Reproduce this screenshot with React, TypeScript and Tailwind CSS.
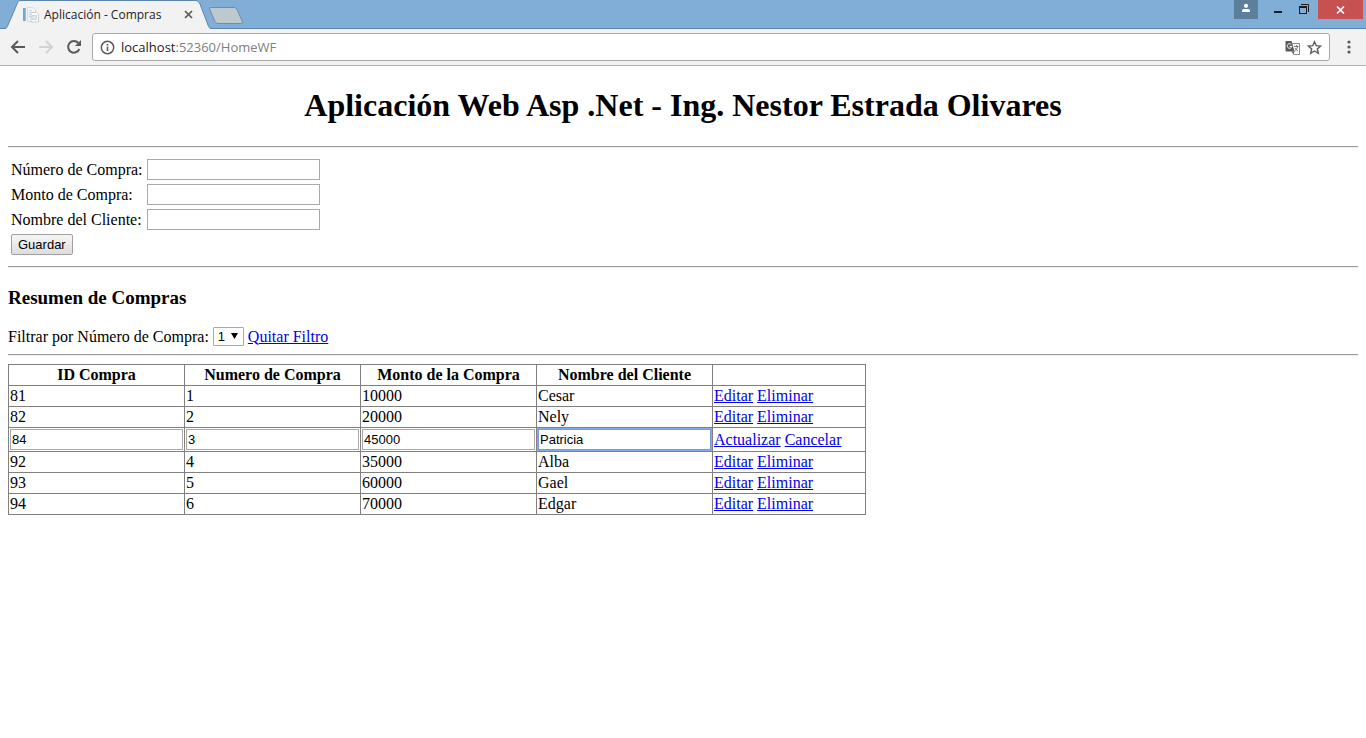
import { useState } from "react";
import type { ReactNode } from "react";

type Purchase = { id: string; number: string; amount: string; client: string };

const purchases: Purchase[] = [
  { id: "81", number: "1", amount: "10000", client: "Cesar" },
  { id: "82", number: "2", amount: "20000", client: "Nely" },
  { id: "84", number: "3", amount: "45000", client: "Patricia" },
  { id: "92", number: "4", amount: "35000", client: "Alba" },
  { id: "93", number: "5", amount: "60000", client: "Gael" },
  { id: "94", number: "6", amount: "70000", client: "Edgar" },
];

const columns = ["ID Compra", "Numero de Compra", "Monto de la Compra", "Nombre del Cliente"];

const fields = [
  { id: "numero", label: "Número de Compra:" },
  { id: "monto", label: "Monto de Compra:" },
  { id: "nombre", label: "Nombre del Cliente:" },
];

function Rule() {
  return <hr className="h-[2px] border-0 border-t border-b border-t-[#9a9a9a] border-b-[#eeeeee]" />;
}

function ActionLink({ children }: { children: ReactNode }) {
  return (
    <a href="#" className="text-[#0000ee] underline">
      {children}
    </a>
  );
}

function TabStrip() {
  return (
    <div className="flex h-[29px] items-start justify-between border-b border-[#5b85ad] bg-[#80aed6]">
      <div className="flex">
        <div className="relative ml-[5px] flex h-[29px] w-[206px] items-center pl-[18px] pr-[18px]">
          <svg className="absolute inset-0" width="206" height="29" viewBox="0 0 206 29" aria-hidden="true">
            <path d="M0 29C2 28 2 27 3 25L12 4C13 2 13 1 15 0.5H191C193 1 194 2 195 4L203 25C204 27 204 28 206 29Z" fill="#f2f2f2" />
            <path d="M0 28.5C2 28 2 27 3 25L12 4C13 2 13 1 15 0.5H191C193 1 194 2 195 4L203 25C204 27 204 28 206 28.5" fill="none" stroke="#5b85ad" />
          </svg>
          <svg className="relative shrink-0" width="16" height="16" viewBox="0 0 16 16" aria-hidden="true">
            <rect x="0" y="1" width="2.700" height="13" fill="#69acd9" />
            <path d="M4.500 0.500H10L12.500 3V14.500H4.500Z" fill="#f4f7f9" stroke="#d3dbe1" />
            <path d="M6 3.500H9M6 5.500H7.500M6 7.500H7.500M6 9.500H7.500" stroke="#c3cdd4" />
            <path d="M8 5.500H13.500L15.500 7.500V15H8Z" fill="#fafcfd" stroke="#c6cfd6" />
            <path d="M9 8.500H13.500V12.500H9Z" fill="#e3e8ec" stroke="#ccd4da" />
          </svg>
          <span className="relative ml-[5px] grow whitespace-nowrap font-['Open_Sans',sans-serif] text-[12px] leading-4 text-[#222222]">
            Aplicación - Compras
          </span>
          <button type="button" aria-label="Cerrar pestaña" className="relative">
            <svg width="9" height="9" viewBox="0 0 9 9">
              <path d="M1 1L8 8M8 1L1 8" stroke="#5a5a5a" strokeWidth="1.7" />
            </svg>
          </button>
        </div>
        <button type="button" aria-label="Nueva pestaña" className="-ml-[3px] mt-[6px] h-[19px]">
          <svg width="36" height="19" viewBox="0 0 36 19">
            <path d="M3 1.500H26Q28 1.500 29 3.500L34.500 16Q35 17.500 33 17.500H10Q8 17.500 7 15.500L1.500 3Q1 1.500 3 1.500Z" fill="#bdc8cf" stroke="#6c8eae" />
          </svg>
        </button>
      </div>
      <div className="flex items-start pr-[3px]">
        <button type="button" aria-label="Usuario" className="flex h-[19px] w-6 justify-center bg-[#5c7f9b] pt-[3px]">
          <svg width="10" height="10" viewBox="0 0 10 10">
            <circle cx="5" cy="2.800" r="2.100" fill="#ffffff" />
            <path d="M1 9V7.500Q1 6 3 6H7Q9 6 9 7.500V9Z" fill="#ffffff" />
          </svg>
        </button>
        <button type="button" aria-label="Minimizar" className="ml-[15px] flex h-[19px] w-[10px] items-start pt-[11px]">
          <svg width="10" height="3" viewBox="0 0 10 3">
            <rect x="1" width="8" height="2" fill="#1c1c1c" />
          </svg>
        </button>
        <button type="button" aria-label="Restaurar" className="ml-4 flex h-[19px] w-[11px] items-start pt-[4px]">
          <svg width="11" height="10" viewBox="0 0 11 10">
            <path d="M2 0.500H9.500V8" fill="none" stroke="#1c1c1c" />
            <path d="M0 2H8V10H0ZM1 4V9H7V4Z" fill="#1c1c1c" fillRule="evenodd" />
          </svg>
        </button>
        <button type="button" aria-label="Cerrar" className="ml-[8px] flex h-[19px] w-[45px] items-center justify-center bg-[#c75050]">
          <svg width="9" height="8" viewBox="0 0 9 8">
            <path d="M1 0.500L8 7.500M8 0.500L1 7.500" stroke="#ffffff" strokeWidth="1.700" />
          </svg>
        </button>
      </div>
    </div>
  );
}

function Toolbar() {
  return (
    <div className="flex h-[37px] items-center border-b border-[#b3b3b3] bg-[#f2f2f2] pl-[10px] pr-[15px]">
      <button type="button" aria-label="Atrás">
        <svg width="16" height="16" viewBox="0 0 16 16">
          <path d="M15 8H2.500M8 2L2 8L8 14" fill="none" stroke="#5a5a5a" strokeWidth="2" />
        </svg>
      </button>
      <button type="button" aria-label="Adelante" className="ml-[12px]">
        <svg width="16" height="16" viewBox="0 0 16 16">
          <path d="M1 8H13.500M8 2L14 8L8 14" fill="none" stroke="#d2d2d2" strokeWidth="2" />
        </svg>
      </button>
      <button type="button" aria-label="Recargar" className="ml-[12px]">
        <svg width="16" height="16" viewBox="0 0 16 16">
          <path d="M13.300 10A5.800 5.800 0 1 1 12.300 4" fill="none" stroke="#5a5a5a" strokeWidth="2" />
          <path d="M15 1V7H9Z" fill="#5a5a5a" />
        </svg>
      </button>
      <div className="ml-[10px] flex h-[28px] grow items-center rounded-[3px] border border-[#a9a9a9] bg-white pl-[7px] pr-[7px]">
        <svg width="15" height="15" viewBox="0 0 15 15" aria-hidden="true">
          <circle cx="7.500" cy="7.500" r="6.200" fill="none" stroke="#5a5a5a" strokeWidth="1.500" />
          <path d="M7.500 6.500V11M7.500 4V5.500" stroke="#5a5a5a" strokeWidth="1.600" />
        </svg>
        <span className="ml-[6px] grow font-['Open_Sans',sans-serif] text-[13px] leading-5 text-[#808080]">
          <span className="text-[#222222]">localhost</span>:52360/HomeWF
        </span>
        <button type="button" aria-label="Traducir">
          <svg width="15" height="15" viewBox="0 0 15 15">
            <path d="M7 3.500H14.500V14.500H8.500" fill="#ffffff" stroke="#8a8a8a" />
            <path d="M9 6.500H13.500M11.500 5V6.500M12.500 7Q12 9.500 9.500 11M10 8Q11 10 13 11" fill="none" stroke="#777777" />
            <path d="M1 1H6.500L9.500 11.500H1.500Q0.500 11.500 0.500 10.500V1.500Z" fill="#5a5a5a" />
            <path d="M6.500 11.500H9.500L8.500 14.500Z" fill="#5a5a5a" />
            <path d="M6.300 4.500A2.300 2.300 0 1 0 6.800 6.500H4.600" fill="none" stroke="#ffffff" />
          </svg>
        </button>
        <button type="button" aria-label="Marcador" className="ml-[7px]">
          <svg width="15" height="15" viewBox="0 0 15 15">
            <path d="M7.500 1.700L9.200 5.700L13.600 6.100L10.300 9L11.300 13.300L7.500 11L3.700 13.300L4.700 9L1.400 6.100L5.800 5.700Z" fill="none" stroke="#5a5a5a" strokeWidth="1.400" />
          </svg>
        </button>
      </div>
      <button type="button" aria-label="Menú" className="ml-[17px]">
        <svg width="4" height="14" viewBox="0 0 4 14">
          <circle cx="2" cy="2" r="1.600" fill="#5a5a5a" />
          <circle cx="2" cy="7" r="1.600" fill="#5a5a5a" />
          <circle cx="2" cy="12" r="1.600" fill="#5a5a5a" />
        </svg>
      </button>
    </div>
  );
}

function PurchaseForm() {
  return (
    <form className="flex flex-col gap-1 px-[3px] pt-[11px] pb-[11px]" onSubmit={(e) => e.preventDefault()}>
      {fields.map((field) => (
        <div key={field.id} className="flex items-center">
          <label htmlFor={field.id} className="w-[136px] whitespace-nowrap">
            {field.label}
          </label>
          <input
            id={field.id}
            type="text"
            className="h-[21px] w-[173px] border border-[#a9a9a9] bg-white px-[2px] font-['Liberation_Sans',sans-serif] text-[13px] outline-none"
          />
        </div>
      ))}
      <button
        type="submit"
        className="h-[21px] self-start rounded-[2px] border border-[#a0a0a0] bg-linear-to-b from-[#f6f6f6] to-[#dddddd] px-[6px] font-['Liberation_Sans',sans-serif] text-[13px] leading-[19px]"
      >
        Guardar
      </button>
    </form>
  );
}

function PurchaseTable() {
  const [draft, setDraft] = useState<Purchase>(purchases[2]);
  const keys: (keyof Purchase)[] = ["id", "number", "amount", "client"];

  return (
    <table className="table-fixed border-collapse">
      <colgroup>
        <col className="w-[176px]" />
        <col className="w-[176px]" />
        <col className="w-[176px]" />
        <col className="w-[176px]" />
        <col className="w-[153px]" />
      </colgroup>
      <thead>
        <tr>
          {columns.map((name) => (
            <th key={name} scope="col" className="border border-[#808080] p-px text-center font-bold">
              {name}
            </th>
          ))}
          <td className="border border-[#808080] p-px" />
        </tr>
      </thead>
      <tbody>
        {purchases.map((row) => {
          const editing = row.id === "84";
          return (
            <tr key={row.id}>
              {keys.map((key, i) => (
                <td key={key} className="border border-[#808080] p-px">
                  {editing ? (
                    <input
                      type="text"
                      aria-label={columns[i]}
                      value={draft[key]}
                      onChange={(e) => setDraft({ ...draft, [key]: e.target.value })}
                      className={
                        key === "client"
                          ? "block h-[21px] w-full border border-[#7b9cd6] px-px font-['Liberation_Sans',sans-serif] text-[13px] ring-1 ring-[#86aaea] outline-none"
                          : "block h-[21px] w-full border border-[#a9a9a9] px-px font-['Liberation_Sans',sans-serif] text-[13px] outline-none"
                      }
                    />
                  ) : (
                    row[key]
                  )}
                </td>
              ))}
              <td className="border border-[#808080] p-px whitespace-nowrap">
                <ActionLink>{editing ? "Actualizar" : "Editar"}</ActionLink>{" "}
                <ActionLink>{editing ? "Cancelar" : "Eliminar"}</ActionLink>
              </td>
            </tr>
          );
        })}
      </tbody>
    </table>
  );
}

export default function App() {
  return (
    <div className="min-h-screen bg-white">
      <header>
        <TabStrip />
        <Toolbar />
      </header>
      <main className="px-2 pb-2 font-['Liberation_Serif',serif] text-[16px] leading-[18px] text-black">
        <h1 className="pt-[21px] pb-[22px] text-center text-[32px] leading-[37px] font-bold">
          Aplicación Web Asp .Net - Ing. Nestor Estrada Olivares
        </h1>
        <Rule />
        <PurchaseForm />
        <Rule />
        <h2 className="pt-[19px] text-[19px] leading-[22px] font-bold">Resumen de Compras</h2>
        <div className="flex items-center gap-1 pt-[18px] pb-2">
          <label htmlFor="filtro">Filtrar por Número de Compra:</label>
          <div className="relative flex">
            <select
              id="filtro"
              defaultValue="1"
              className="h-[19px] w-[31px] appearance-none rounded-[1px] border border-[#a9a9a9] bg-white pl-[4px] font-['Liberation_Sans',sans-serif] text-[13px] leading-[17px]"
            >
              {purchases.map((p) => (
                <option key={p.number}>{p.number}</option>
              ))}
            </select>
            <svg className="pointer-events-none absolute top-[6px] right-[6px]" width="7" height="6" viewBox="0 0 7 6" aria-hidden="true">
              <path d="M0 0H7L3.500 6Z" fill="#000000" />
            </svg>
          </div>
          <ActionLink>Quitar Filtro</ActionLink>
        </div>
        <Rule />
        <div className="pt-2">
          <PurchaseTable />
        </div>
      </main>
    </div>
  );
}
